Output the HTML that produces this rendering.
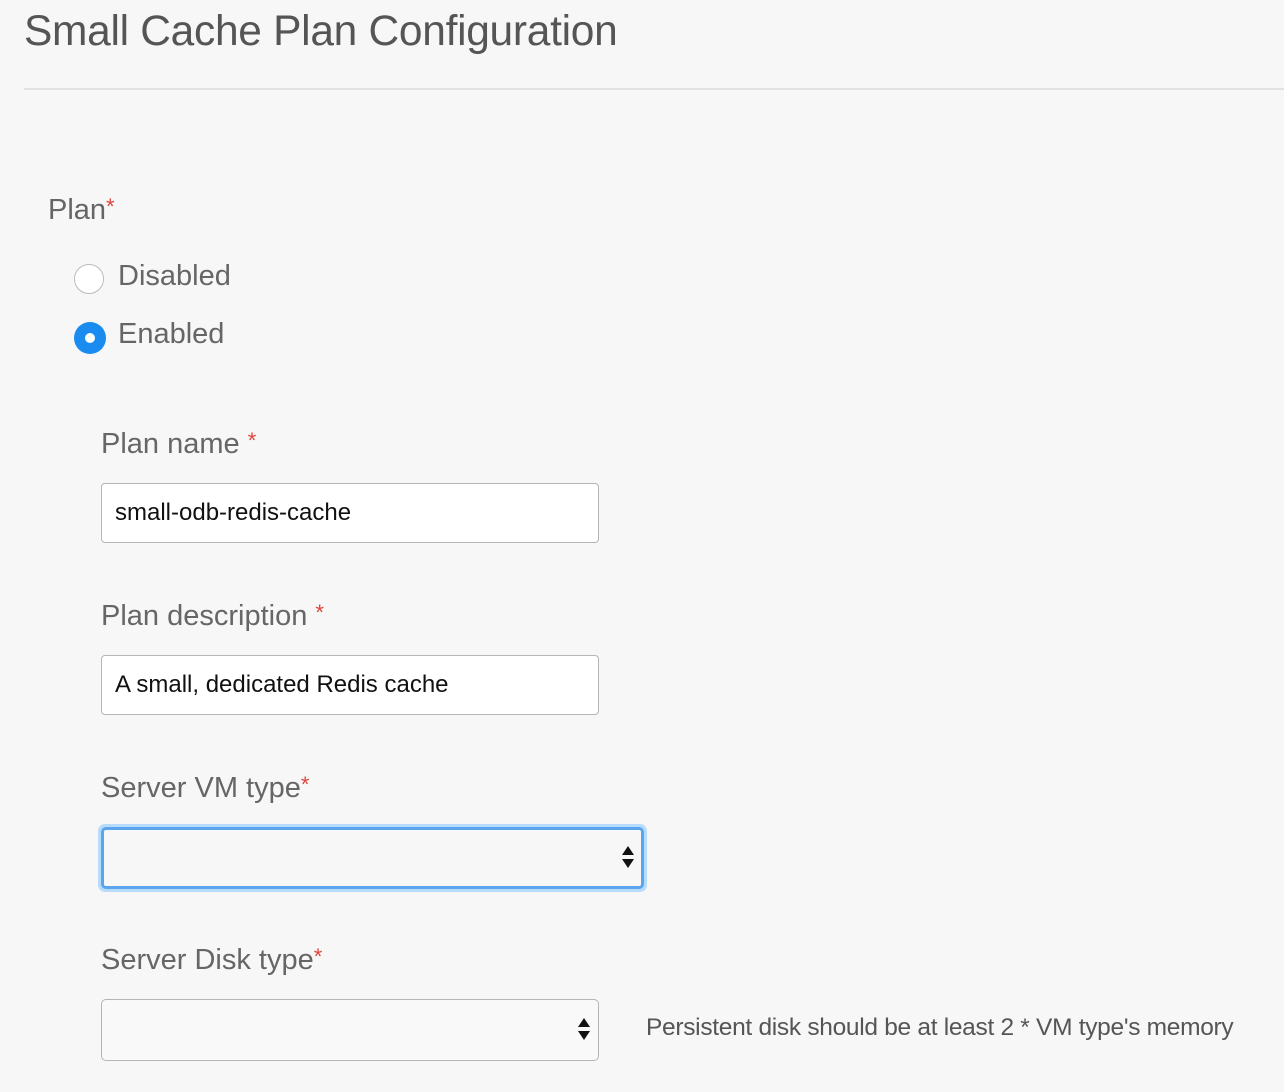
<!DOCTYPE html>
<html><head><style>
body{margin:0;width:1284px;height:1092px;background:#f7f7f7;font-family:"Liberation Sans",sans-serif;position:relative;overflow:hidden;color:#666}
.a{position:absolute;white-space:nowrap}
h1{position:absolute;left:24px;top:8px;margin:0;font-weight:normal;font-size:42.5px;color:#555;letter-spacing:-0.3px}
.hr{position:absolute;left:24px;right:0;top:88px;height:2px;background:#e2e2e2}
.lbl{font-size:29px;color:#666}
.req{color:#e0443a;font-size:22px;vertical-align:top}
.inp{position:absolute;left:101px;width:496px;height:58px;border:1px solid #b5b5b5;border-radius:4px;background:#fff;box-sizing:content-box}
.inp span{position:absolute;left:13px;top:15px;font-size:24px;color:#111}
</style></head><body>
<h1>Small Cache Plan Configuration</h1>
<div class="hr"></div>
<div class="a lbl" style="left:48px;top:194px">Plan<span class="req">*</span></div>
<div class="a" style="left:74px;top:264px;width:30px;height:30px;border-radius:50%;border:1px solid #bbb;background:#fff;box-sizing:border-box"></div>
<div class="a lbl" style="left:118px;top:260px">Disabled</div>
<div class="a" style="left:74px;top:322px;width:32px;height:32px;border-radius:50%;background:#1a8cf0"></div>
<div class="a" style="left:85px;top:333px;width:10px;height:10px;border-radius:50%;background:#fff"></div>
<div class="a lbl" style="left:118px;top:318px">Enabled</div>

<div class="a lbl" style="left:101px;top:428px">Plan name <span class="req">*</span></div>
<div class="inp" style="top:483px"><span>small-odb-redis-cache</span></div>

<div class="a lbl" style="left:101px;top:600px">Plan description <span class="req">*</span></div>
<div class="inp" style="top:655px"><span>A small, dedicated Redis cache</span></div>

<div class="a lbl" style="left:101px;top:772px">Server VM type<span class="req">*</span></div>
<div class="a" style="left:98px;top:824px;width:549px;height:68px;border-radius:7px;background:#b7dcfb"></div>
<div class="a" style="left:101px;top:827px;width:537px;height:56px;border:3px solid #5aa5ee;border-radius:5px;background:#f7f7f7"></div>
<div class="a" style="left:622px;top:846px;border-left:6px solid transparent;border-right:6px solid transparent;border-bottom:9px solid #111"></div>
<div class="a" style="left:622px;top:859px;border-left:6px solid transparent;border-right:6px solid transparent;border-top:9px solid #111"></div>

<div class="a lbl" style="left:101px;top:944px">Server Disk type<span class="req">*</span></div>
<div class="a" style="left:101px;top:999px;width:496px;height:60px;border:1px solid #b5b5b5;border-radius:5px;background:#f9f9f9"></div>
<div class="a" style="left:578px;top:1018px;border-left:6px solid transparent;border-right:6px solid transparent;border-bottom:9px solid #111"></div>
<div class="a" style="left:578px;top:1031px;border-left:6px solid transparent;border-right:6px solid transparent;border-top:9px solid #111"></div>
<div class="a" style="left:646px;top:1014px;font-size:24.5px;color:#555;letter-spacing:-0.3px">Persistent disk should be at least 2 * VM type's memory</div>
</body></html>
